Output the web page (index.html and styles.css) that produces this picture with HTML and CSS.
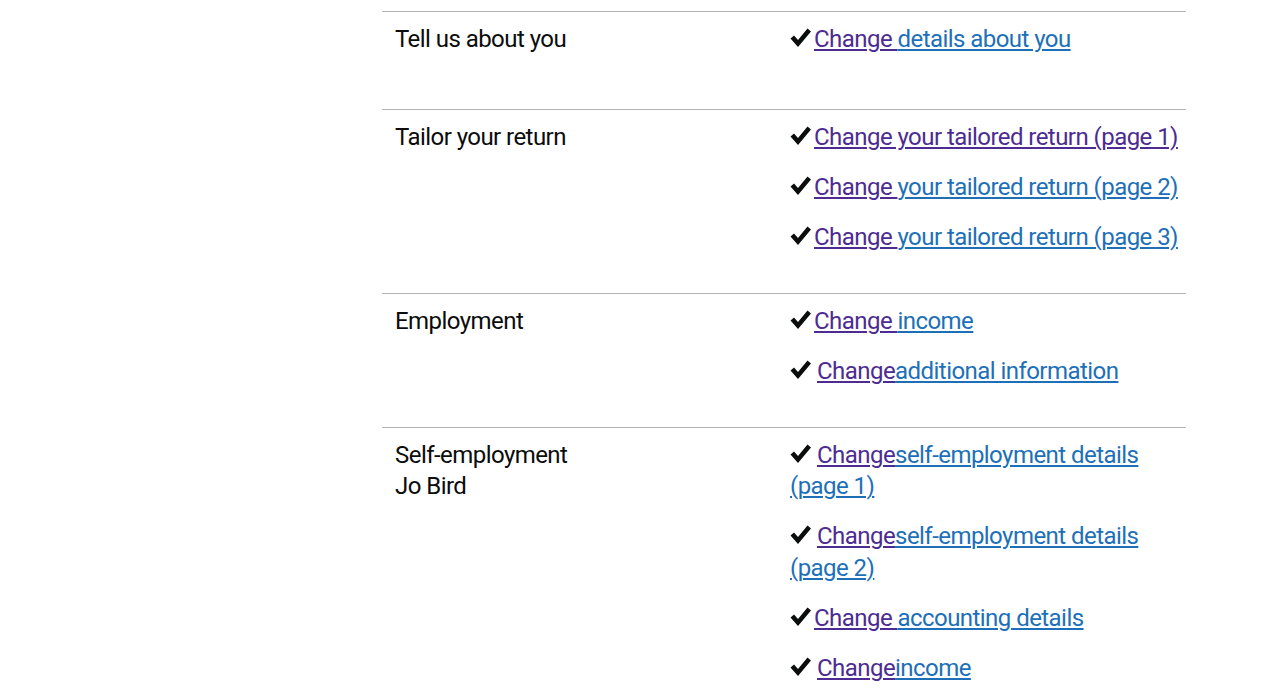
FILE: index.html
```html
<!DOCTYPE html>
<html lang="en">
<head>
<meta charset="utf-8">
<title>Check your return</title>
<link rel="stylesheet" href="styles.css">
</head>
<body>
<main class="page">
  <div class="list">
    <div class="row row-first">
      <div class="key">Tell us about you</div>
      <ul class="actions">
        <li><svg class="tick" viewBox="0 0 21 20" aria-hidden="true"><path d="M0.5 10.5 L4 7.5 L8 12 L17.5 0.5 L21 3.5 L8 19 Z"/></svg><a class="visited" href="#">Change </a><a href="#">details about you</a></li>
      </ul>
    </div>
    <div class="row">
      <div class="key">Tailor your return</div>
      <ul class="actions">
        <li><svg class="tick" viewBox="0 0 21 20" aria-hidden="true"><path d="M0.5 10.5 L4 7.5 L8 12 L17.5 0.5 L21 3.5 L8 19 Z"/></svg><a class="visited" href="#">Change your tailored return (page 1)</a></li>
        <li><svg class="tick" viewBox="0 0 21 20" aria-hidden="true"><path d="M0.5 10.5 L4 7.5 L8 12 L17.5 0.5 L21 3.5 L8 19 Z"/></svg><a class="visited" href="#">Change </a><a href="#">your tailored return (page 2)</a></li>
        <li><svg class="tick" viewBox="0 0 21 20" aria-hidden="true"><path d="M0.5 10.5 L4 7.5 L8 12 L17.5 0.5 L21 3.5 L8 19 Z"/></svg><a class="visited" href="#">Change </a><a href="#">your tailored return (page 3)</a></li>
      </ul>
    </div>
    <div class="row">
      <div class="key">Employment</div>
      <ul class="actions">
        <li><svg class="tick" viewBox="0 0 21 20" aria-hidden="true"><path d="M0.5 10.5 L4 7.5 L8 12 L17.5 0.5 L21 3.5 L8 19 Z"/></svg><a class="visited" href="#">Change </a><a href="#">income</a></li>
        <li><svg class="tick" viewBox="0 0 21 20" aria-hidden="true"><path d="M0.5 10.5 L4 7.5 L8 12 L17.5 0.5 L21 3.5 L8 19 Z"/></svg><a class="visited spaced" href="#">Change</a><a href="#">additional information</a></li>
      </ul>
    </div>
    <div class="row">
      <div class="key">Self-employment<br>Jo Bird</div>
      <ul class="actions">
        <li><svg class="tick" viewBox="0 0 21 20" aria-hidden="true"><path d="M0.5 10.5 L4 7.5 L8 12 L17.5 0.5 L21 3.5 L8 19 Z"/></svg><a class="visited spaced" href="#">Change</a><a href="#">self-employment details (page 1)</a></li>
        <li><svg class="tick" viewBox="0 0 21 20" aria-hidden="true"><path d="M0.5 10.5 L4 7.5 L8 12 L17.5 0.5 L21 3.5 L8 19 Z"/></svg><a class="visited spaced" href="#">Change</a><a href="#">self-employment details (page 2)</a></li>
        <li><svg class="tick" viewBox="0 0 21 20" aria-hidden="true"><path d="M0.5 10.5 L4 7.5 L8 12 L17.5 0.5 L21 3.5 L8 19 Z"/></svg><a class="visited" href="#">Change </a><a href="#">accounting details</a></li>
        <li><svg class="tick" viewBox="0 0 21 20" aria-hidden="true"><path d="M0.5 10.5 L4 7.5 L8 12 L17.5 0.5 L21 3.5 L8 19 Z"/></svg><a class="visited spaced" href="#">Change</a><a href="#">income</a></li>
      </ul>
    </div>
  </div>
</main>
</body>
</html>
```

FILE: styles.css
```css
html, body {
  margin: 0;
  padding: 0;
  background: #ffffff;
}

body {
  font-family: Roboto, "Liberation Sans", Arial, sans-serif;
  font-size: 24px;
  line-height: 31.25px;
  letter-spacing: -0.55px;
  color: #0b0c0c;
}

.page {
  padding: 11px 0 0 382px;
}

.list {
  width: 804px;
}

.row {
  display: grid;
  grid-template-columns: 408px 396px;
  border-top: 1px solid #b1b4b6;
}

.key {
  padding: 12px 0 0 13px;
}

.actions {
  list-style: none;
  margin: 0;
  padding: 12px 0 21px 0;
}

.row-first .actions {
  padding-bottom: 35px;
}

.actions li {
  margin: 0 0 18.75px 0;
}

.tick {
  width: 21px;
  height: 20px;
  vertical-align: -1px;
  margin-right: 3px;
  fill: #0b0c0c;
}

a {
  color: #1d70b8;
  text-decoration: underline;
  text-decoration-thickness: 2px;
  text-underline-offset: 2px;
}

a.visited {
  color: #4c2c92;
}

a.spaced {
  margin-left: 3px;
}
```
